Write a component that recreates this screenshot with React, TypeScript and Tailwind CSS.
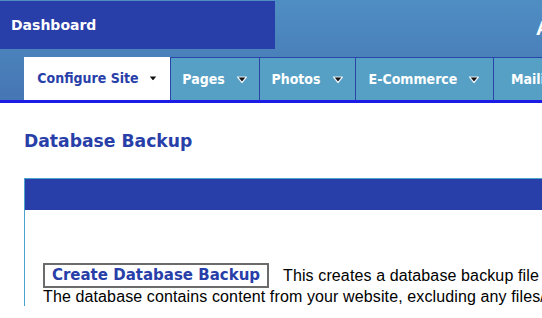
import { ReactNode } from 'react'

const tabs = [
  { label: 'Configure Site', w: 'w-[146px]', active: true },
  { label: 'Pages', w: 'w-[89px]' },
  { label: 'Photos', w: 'w-[96px]' },
  { label: 'E-Commerce', w: 'w-[138px]' },
  { label: 'Mailing List', w: 'w-[140px]' },
]

function Caret({ light }: { light?: boolean }) {
  return (
    <svg width="12" height="8" viewBox="0 0 12 8" className="shrink-0 mt-[1px]">
      <polygon
        points="1.5,1 10.5,1 6,6.5"
        fill="#111"
        stroke={light ? '#e8f0f6' : '#ffffff'}
        strokeWidth="1.2"
        strokeLinejoin="round"
      />
    </svg>
  )
}

function Tab({ label, w, active }: { label: string; w: string; active?: boolean }): ReactNode {
  return (
    <div
      className={
        active
          ? `${w} shrink-0 h-full bg-white flex items-center justify-center gap-[8px] pl-[2px] text-[#283ea8]`
          : `${w} shrink-0 h-full bg-[#56a0c5] border-l border-t border-[#2a45a8] flex items-center justify-center gap-[11px] text-white`
      }
    >
      <span className="font-['DejaVu_Sans_Condensed','DejaVu_Sans',sans-serif] font-bold text-[14px] whitespace-nowrap">
        {label}
      </span>
      <Caret light={!active} />
    </div>
  )
}

export default function App() {
  return (
    <div className="w-[542px] h-[318px] overflow-hidden bg-white">
      {/* Header */}
      <div className="bg-gradient-to-b from-[#4f8ec3] to-[#4676b4]">
        <div className="h-[57px] pt-[1px] flex items-start">
          <div className="w-[275px] h-[48px] bg-[#283ea8] flex items-center pl-[11px]">
            <span className="font-['DejaVu_Sans',sans-serif] font-bold text-[14px] text-white">
              Dashboard
            </span>
          </div>
          <div className="flex-1 flex justify-end pt-[16px] overflow-hidden">
            <span className="font-['Liberation_Sans',sans-serif] font-bold text-[21px] text-white translate-x-[9px] leading-none">
              A
            </span>
          </div>
        </div>

        {/* Nav */}
        <div className="h-[43px] pl-[24px] flex">
          {tabs.map((t) => (
            <Tab key={t.label} label={t.label} w={t.w} active={t.active} />
          ))}
        </div>
      </div>
      <div className="h-[3px] bg-[#1c1ce6]" />

      {/* Content */}
      <div className="pl-[24px] pt-[27px]">
        <h1 className="font-['DejaVu_Sans',sans-serif] font-bold text-[17.2px] text-[#283ea8] leading-[22px]">
          Database Backup
        </h1>

        <div className="mt-[26px] w-[700px] border-l border-t border-[#4aa3cc]">
          <div className="h-[31px] bg-[#283ea8]" />
          <div className="pl-[18px] pt-[53px] font-['Liberation_Sans',sans-serif] text-[16px] tracking-[0.12px] text-black leading-[18px]">
            <div className="flex items-center">
              <button className="h-[25px] w-[226px] shrink-0 border-2 border-[#6b6b6b] bg-white font-['DejaVu_Sans',sans-serif] font-bold text-[15px] tracking-normal text-[#283ea8] leading-none">
                Create Database Backup
              </button>
              <span className="ml-[14px] whitespace-nowrap">This creates a database backup file which can be downloaded.</span>
            </div>
            <div className="whitespace-nowrap">
              The database contains content from your website, excluding any files/images.
            </div>
          </div>
        </div>
      </div>
    </div>
  )
}
